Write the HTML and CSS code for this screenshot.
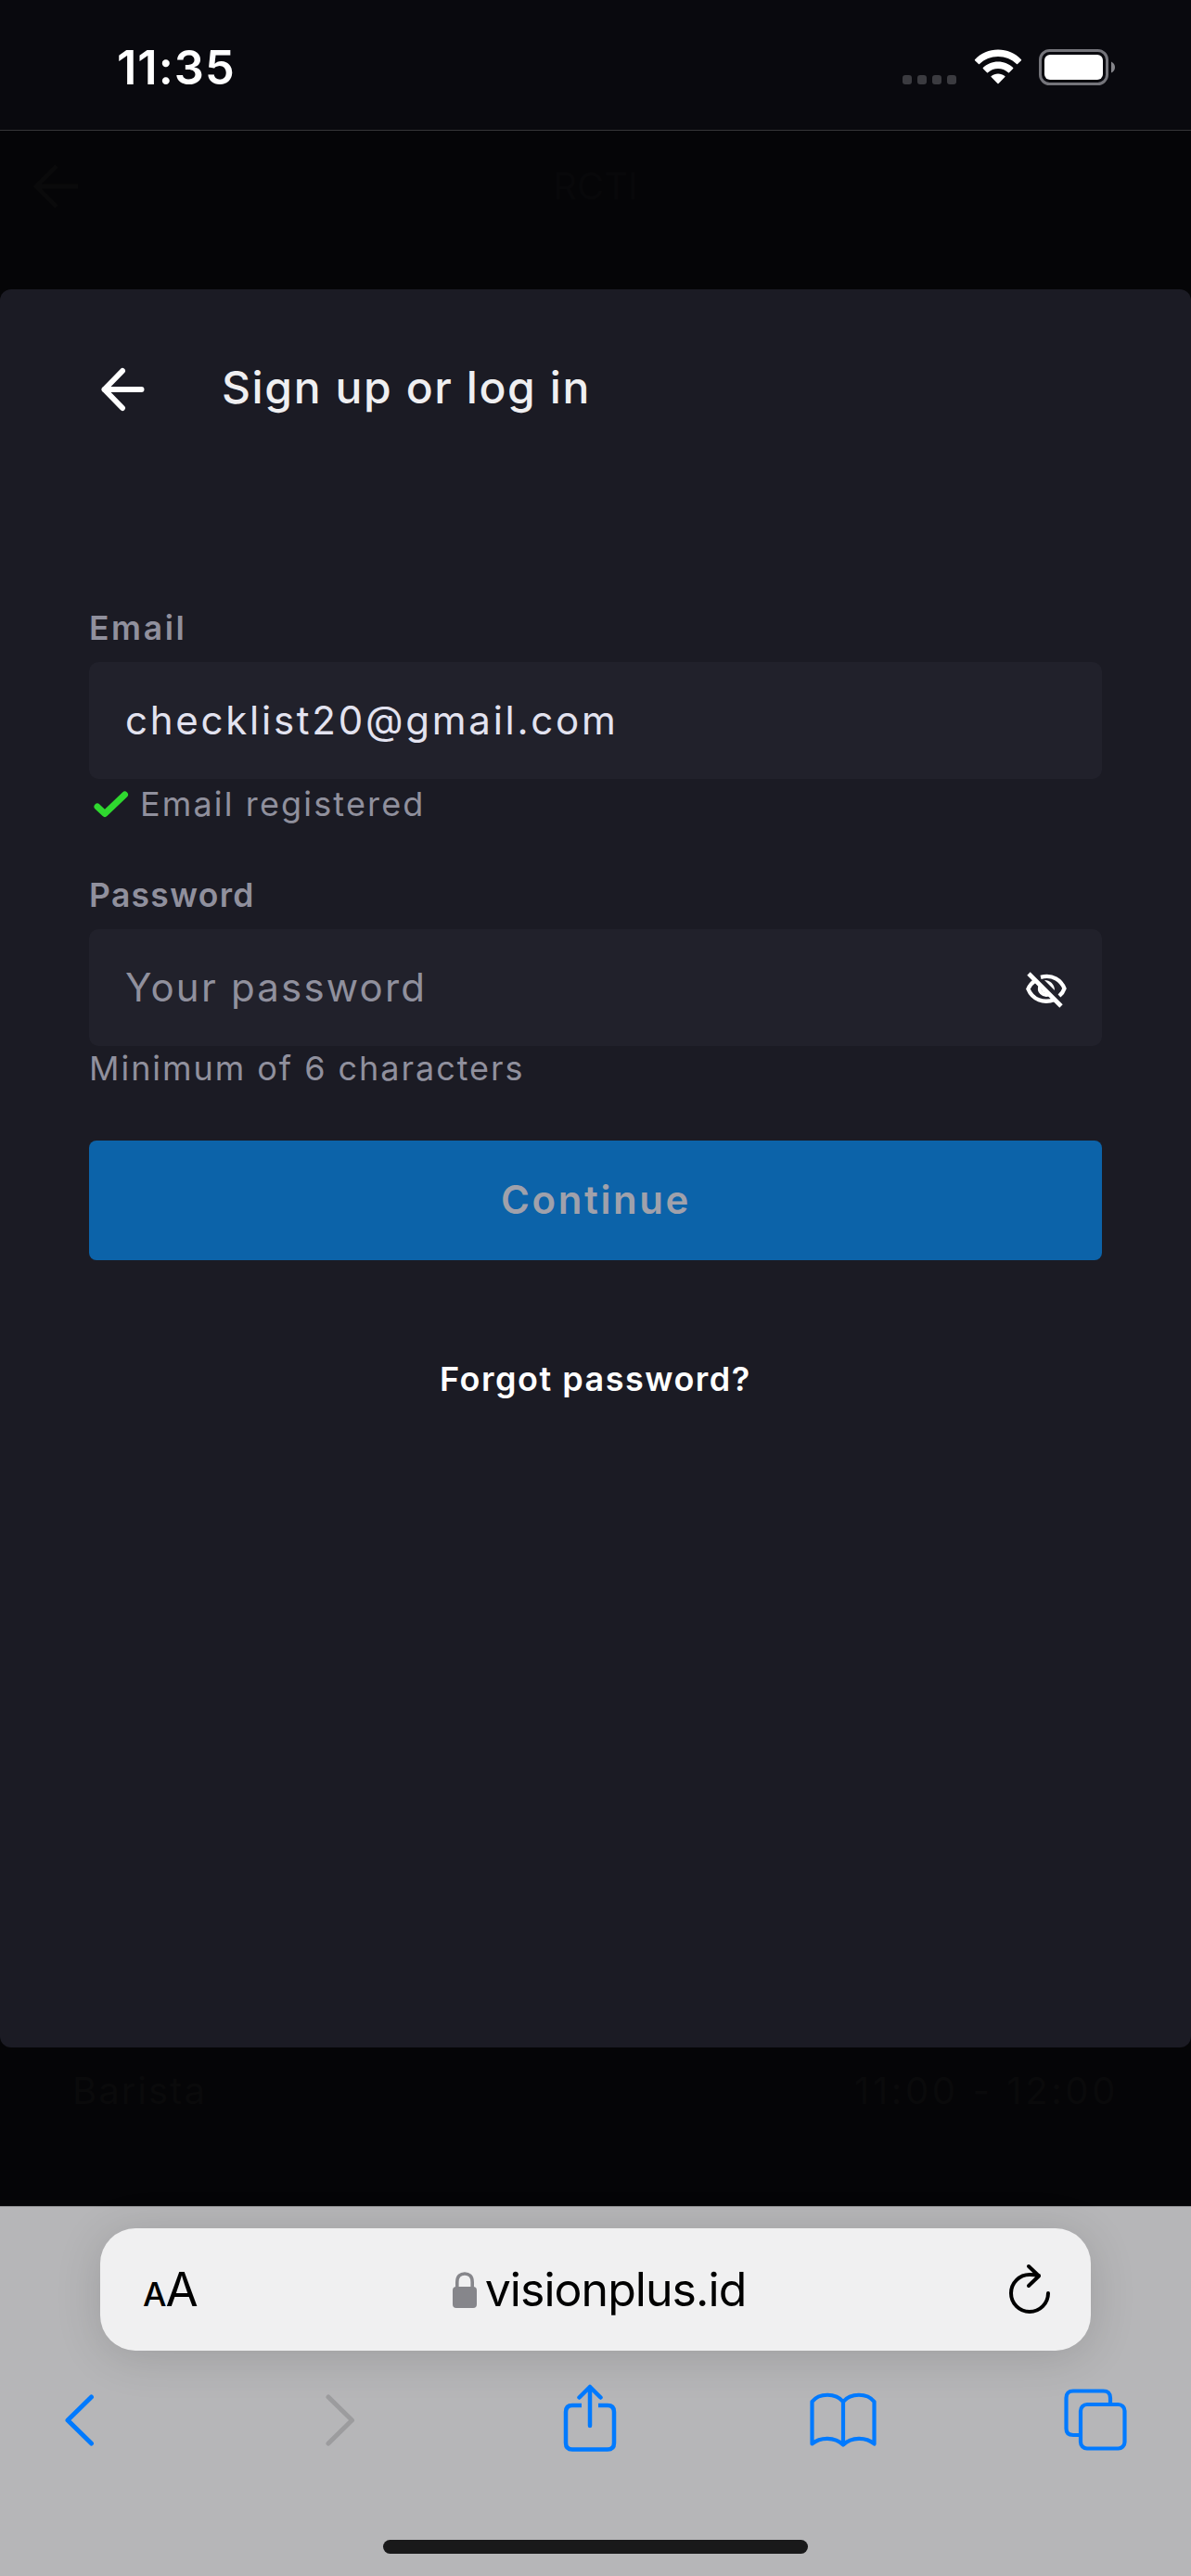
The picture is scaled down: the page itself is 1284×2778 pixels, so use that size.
FILE: index.html
```
<!DOCTYPE html>
<html lang="en">
<head>
<meta charset="utf-8">
<title>Sign up or log in</title>
<link rel="stylesheet" href="styles.css">
</head>
<body>
<div class="screen">
  <header class="status">
    <span class="time">11:35</span>
    <div class="indicators">
      <div class="cell"><i></i><i></i><i></i><i></i></div>
      <svg class="wifi" width="52" height="38" viewBox="0 0 52 38" fill="#fff">
        <path d="M1 11.2C7.500 4.300 16.500.500 26 .500S44.500 4.300 51 11.200Q51.400 11.700 51 12.200L47 16Q46.500 16.400 46 16C40.700 10.700 33.500 8 26 8S11.300 10.700 6 16Q5.500 16.400 5 16L1 12.200Q.600 11.700 1 11.200Z"/>
        <path d="M9.800 20.100C14 15.900 19.800 13.500 26 13.500S38 15.900 42.200 20.100Q42.600 20.600 42.200 21.100L38 25.200Q37.500 25.600 37 25.200C34 22.500 30.100 21 26 21S18 22.500 15 25.200Q14.500 25.600 14 25.200L9.800 21.100Q9.400 20.600 9.800 20.100Z"/>
        <path d="M18.700 29C20.700 27.400 23.300 26.500 26 26.500S31.300 27.400 33.300 29Q33.900 29.500 33.400 30.100L26.600 37Q26 37.500 25.400 37L18.600 30.100Q18.100 29.500 18.700 29Z"/>
      </svg>
      <svg class="battery" width="82" height="39" viewBox="0 0 82 39">
        <rect x="1.500" y="1.500" width="72" height="36" rx="10" fill="none" stroke="#74747a" stroke-width="3"/>
        <rect x="6" y="6" width="63" height="27" rx="6" fill="#fff"/>
        <path d="M78 13.500Q82 15.500 82 19.500T78 25.500Z" fill="#85858a"/>
      </svg>
    </div>
  </header>

  <div class="backdrop-top">
    <svg width="50" height="50" viewBox="0 0 50 50" fill="none" stroke="#0a0a0b" stroke-width="5"><path d="M48 25H4M25 3L3 25L25 47"/></svg>
    <span class="channel">RCTI</span>
  </div>

  <main class="modal">
    <div class="head">
      <svg width="50" height="50" viewBox="0 0 50 50" fill="none" stroke="#fff" stroke-width="6" stroke-linecap="round" stroke-linejoin="round"><path d="M43.500 26H3.500M23 6L3.500 26L23 46"/></svg>
      <h1>Sign up or log in</h1>
    </div>
    <label class="label">Email</label>
    <div class="field email">checklist20@gmail.com</div>
    <div class="hint registered">
      <svg width="38" height="29" viewBox="0 0 38 29" fill="none" stroke="#2fd82f" stroke-width="7" stroke-linecap="round" stroke-linejoin="round"><path d="M4 17L12 24.500L33.500 4"/></svg>
      <span>Email registered</span>
    </div>
    <label class="label second">Password</label>
    <div class="field placeholder"><span>Your password</span>
      <svg class="eye" width="44" height="40" viewBox="0 0 44 40" fill="none" stroke="#fff">
        <path stroke-width="4.300" d="M16 5.800C29 2.500 38 9 41.500 18Q40 22.500 36 26M10 9.500Q4.800 13 2.400 18.500C7 30 19 34.500 31 30"/>
        <path fill="#fff" stroke="none" d="M20 9C26 9 31 13.500 31 20Z"/>
        <path stroke-width="3.800" d="M15.500 15C13 21 18 26.500 25 24.500"/>
        <path stroke-width="2.800" d="M18.500 18.500Q18 21 21 22"/>
        <path stroke-width="4.800" d="M3 2L38 37"/>
      </svg>
    </div>
    <div class="hint minimum">Minimum of 6 characters</div>
    <button class="continue">Continue</button>
    <a class="forgot">Forgot password?</a>
  </main>

  <div class="backdrop-bottom"><span class="show">Barista</span><span class="slot">11:00 - 12:00</span></div>

  <footer class="browser">
    <div class="address">
      <span class="size"><small>A</small>A</span>
      <div class="site">
        <svg width="26" height="39" viewBox="0 0 26 39"><rect y="16" width="26" height="23" rx="4" fill="#86868b"/><path d="M4.800 18V11C4.800 4.500 8.500 2 13 2S21.200 4.500 21.200 11V18" fill="none" stroke="#86868b" stroke-width="3.600"/></svg>
        <span>visionplus.id</span>
      </div>
      <svg class="reload" width="46" height="56" viewBox="0 0 46 56" fill="none" stroke="#000" stroke-width="4" stroke-linecap="round" stroke-linejoin="round"><path d="M43 32A20 20 0 1 1 23 12Q28 12 33 13M22 3L33 13.500L22 24"/></svg>
    </div>
    <nav class="tools">
      <svg width="32" height="56" viewBox="0 0 32 56" fill="none" stroke="#007aff" stroke-width="5" stroke-linecap="round" stroke-linejoin="round"><path d="M28.500 3L3 28L28.500 53"/></svg>
      <svg width="32" height="56" viewBox="0 0 32 56" fill="none" stroke="#9c9c9e" stroke-width="5" stroke-linecap="round" stroke-linejoin="round"><path d="M3 3L28.500 28L3 53"/></svg>
      <svg class="share" width="58" height="74" viewBox="0 0 58 74" fill="none" stroke="#007aff" stroke-width="4.500" stroke-linecap="round" stroke-linejoin="round"><path stroke-linecap="butt" d="M20 23H10Q3 23 3 30V63.500Q3 70.500 10 70.500H48Q55 70.500 55 63.500V30Q55 23 48 23H38"/><path d="M29 45V3M17.500 14.500L29 3L40.500 14.500"/></svg>
      <svg width="72" height="60" viewBox="0 0 72 60" fill="none" stroke="#007aff" stroke-width="4.200" stroke-linecap="round" stroke-linejoin="round"><path d="M36 10C28 .300 10 .300 2.500 10V55.500C11 48 27 47.500 36 56.500C45 47.500 61 48 69.500 55.500V10C62 .300 44 .300 36 10Z"/><path d="M36 10V56"/></svg>
      <svg width="68" height="68" viewBox="0 0 68 68" fill="none" stroke="#007aff" stroke-width="4.200"><rect x="18" y="17" width="47.500" height="47.500" rx="7"/><path d="M50 17V10Q50 2.500 42.500 2.500H10Q2.500 2.500 2.500 10V43Q2.500 50 10 50H18"/></svg>
    </nav>
    <div class="home"></div>
  </footer>
</div>
</body>
</html>
```
FILE: styles.css
```
* { box-sizing: border-box; }
body { margin: 0; background: #050507; font-family: Inter, "Liberation Sans", sans-serif; }
svg { display: block; flex: none; }
.screen { width: 1284px; height: 2778px; display: flex; flex-direction: column; overflow: hidden; }

.status { height: 141px; flex: none; background: #09090e; border-bottom: 1px solid #353538; display: flex; justify-content: space-between; padding: 53px 82px 0 126px; color: #fff; }
.time { font-size: 50.5px; font-weight: 600; line-height: 40px; letter-spacing: 1px; }
.indicators { display: flex; align-items: flex-start; height: 39px; }
.cell { display: flex; gap: 6px; margin: 28px 19px 0 0; }
.cell i { width: 10px; height: 10px; border-radius: 3px; background: #3b3b40; }
.wifi { margin: 0 18px 0 0; }

.backdrop-top { height: 171px; flex: none; display: grid; grid-template-columns: 1fr auto 1fr; align-items: start; padding: 35px 36px 0; color: #08080a; }
.channel { font-size: 40px; font-weight: 400; line-height: 50px; }

.modal { height: 1896px; flex: none; background: #1b1b24; border-radius: 12px; padding: 82px 96px 0; display: flex; flex-direction: column; color: #fff; }
.head { display: flex; align-items: center; height: 50px; padding-left: 13px; gap: 80px; }
h1 { margin: -2px 0 0; font-size: 48px; font-weight: 550; line-height: 50px; letter-spacing: 1.6px; color: #efeff1; white-space: nowrap; }
.label { margin-top: 209px; height: 50px; line-height: 50px; font-size: 35.5px; font-weight: 600; letter-spacing: 2.6px; color: #90909d; }
.label.second { margin-top: 49px; letter-spacing: 1.3px; }
.field { height: 126px; margin-top: 11px; border-radius: 10px; background: #21212b; display: flex; align-items: center; justify-content: space-between; padding: 0 38px 1px 39px; font-size: 42px; color: #e3e3f0; }
.field.email { letter-spacing: 2.75px; }
.field.placeholder { color: #90909d; letter-spacing: 2.2px; }
.eye { margin-top: 6px; }
.hint { height: 50px; font-size: 36px; line-height: 50px; color: #90909d; letter-spacing: 2.15px; }
.registered { margin-top: 2px; display: flex; align-items: center; gap: 12px; padding-left: 5px; }
.minimum { line-height: 49px; letter-spacing: 1.95px; }
.continue { margin-top: 52px; height: 129px; border: 0; border-radius: 8px; background: #0c63a9; color: #a0a1ab; font-family: inherit; font-size: 42px; font-weight: 600; padding: 0 0 3px 1px; letter-spacing: 2.6px; }
.forgot { margin-top: 103px; line-height: 50px; text-align: center; font-size: 36px; font-weight: 600; letter-spacing: 1.5px; }

.backdrop-bottom { height: 171px; flex: none; display: flex; justify-content: space-between; padding: 22px 78px 0; font-size: 40px; line-height: 50px; color: #0a0a0b; }
.show { letter-spacing: 2px; }
.slot { letter-spacing: 3.6px; }

.browser { flex: 1; background: #b6b6b8; border-top: 1px solid #8f8f91; padding-top: 23px; }
.address { position: relative; width: 1068px; height: 132px; margin: 0 auto; border-radius: 38px; background: #f0f0f1; box-shadow: 0 6px 50px rgba(0,0,0,.14); display: flex; align-items: center; justify-content: space-between; padding: 0 43px 0 46px; color: #000; }
.size { font-size: 51px; width: 60px; line-height: 60px; white-space: nowrap; letter-spacing: -1px; padding-top: 5px; }
.size small { font-size: 36px; font-weight: 500; }
.site { display: flex; align-items: center; gap: 9px; margin-right: 9px; font-size: 50px; line-height: 60px; letter-spacing: -.95px; }
.tools { display: grid; grid-template-columns: 281px 256px 266px 274px auto; align-items: center; height: 78px; margin-top: 36px; padding-left: 70px; }
.share { margin-bottom: 4px; }
.home { width: 458px; height: 15px; margin: 90px auto 0; border-radius: 8px; background: #19191a; }
```
